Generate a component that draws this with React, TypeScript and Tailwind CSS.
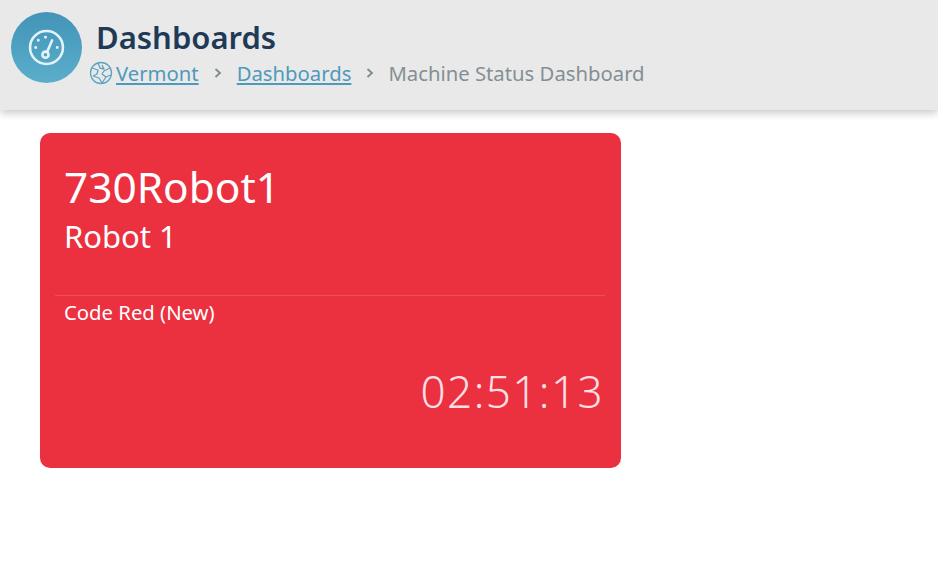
import React from "react";

function GaugeIcon() {
  return (
    <svg viewBox="0 0 36 36" className="h-[37px] w-[37px]" fill="none" stroke="#e3f3f8" strokeWidth="2.5" strokeLinecap="round">
      <circle cx="18" cy="18" r="16" />
      <circle cx="17" cy="25" r="3" />
      <path d="M18.5 22.5 L23.5 11" />
      <circle cx="17" cy="8" r="0.9" fill="#e3f3f8" strokeWidth="1" />
      <circle cx="10" cy="11" r="0.9" fill="#e3f3f8" strokeWidth="1" />
      <circle cx="7.5" cy="18" r="0.9" fill="#e3f3f8" strokeWidth="1" />
      <circle cx="28.5" cy="18" r="0.9" fill="#e3f3f8" strokeWidth="1" />
    </svg>
  );
}

function GlobeIcon() {
  return (
    <svg viewBox="0 0 24 24" className="h-[24px] w-[24px] shrink-0" fill="none" stroke="#5fa3c1" strokeWidth="1.3" strokeLinejoin="round">
      <circle cx="12" cy="12" r="10.5" />
      <path d="M3 7 L9 9 L8 13 L4 15 M9 2 L11 7 L15 8 L13 4 M21 7 L15 10 L13 13 L17 16 L13 22 L10 17 L4 15 M17 16 L22 14" />
    </svg>
  );
}

function Chevron() {
  return (
    <svg viewBox="0 0 8 10" className="h-[10px] w-[8px] shrink-0" fill="none" stroke="#7d8a90" strokeWidth="1.8">
      <path d="M1.5 1 L6 5 L1.5 9" />
    </svg>
  );
}

export default function App() {
  return (
    <div className="h-[582px] w-[938px] overflow-hidden bg-white font-['Noto_Sans',sans-serif]">
      <header className="flex h-[110px] items-start gap-[14px] bg-[#e9e9e9] pl-[11px] pt-[12px] shadow-[0_3px_8px_rgba(0,0,0,0.22)]">
        <div className="flex h-[71px] w-[71px] shrink-0 items-center justify-center rounded-full bg-gradient-to-b from-[#4394b8] to-[#5aaecb]">
          <GaugeIcon />
        </div>
        <div className="pt-[6px]">
          <h1 className="text-[31px] font-semibold leading-[38px] text-[#1f3a56]">Dashboards</h1>
          <nav className="-ml-[7px] mt-[3px] flex items-center text-[20.3px] leading-[28px]">
            <GlobeIcon />
            <a className="ml-[3px] text-[#4f9abb] underline underline-offset-2">Vermont</a>
            <span className="ml-[15px] mr-[15px]"><Chevron /></span>
            <a className="text-[#4f9abb] underline underline-offset-2">Dashboards</a>
            <span className="ml-[15px] mr-[14px]"><Chevron /></span>
            <span className="text-[#848f95]">Machine Status Dashboard</span>
          </nav>
        </div>
      </header>
      <main className="pl-[40px] pt-[23px]">
        <section className="flex h-[335px] w-[581px] flex-col rounded-[10px] bg-[#eb3040] px-[24px] pt-[30px] text-white">
          <div className="text-[42.4px] leading-[48px]">730Robot1</div>
          <div className="mt-[5px] text-[31px] leading-[40px]">Robot 1</div>
          <div className="-mr-[8px] -ml-[9px] mt-[39px] border-t border-[#ef4d5c]" />
          <div className="mt-[3px] text-[20.3px] leading-[26px]">Code Red (New)</div>
          <div className="mt-[40px] -mr-[7px] text-right text-[44px] font-light leading-[52px] tracking-[1.4px] text-[#fbdfe2]">02:51:13</div>
        </section>
      </main>
    </div>
  );
}
